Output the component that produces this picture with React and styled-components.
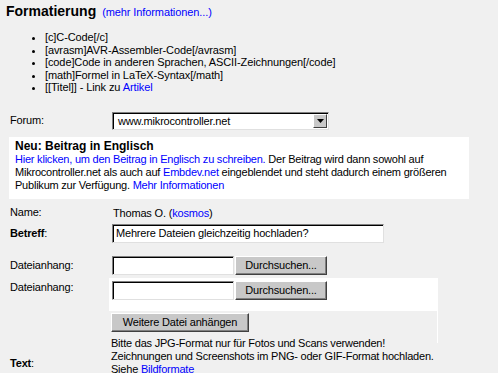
import React from "react";
import styled, { createGlobalStyle } from "styled-components";

const GlobalStyle = createGlobalStyle`
  html, body {
    margin: 0;
    padding: 0;
    background: #f0f0f0;
  }
  body {
    font-family: "Liberation Sans", Arial, sans-serif;
    font-size: 11px;
    letter-spacing: -0.18px;
    color: #000;
    overflow: hidden;
  }
`;

const formatTags = [
  "[c]C-Code[/c]",
  "[avrasm]AVR-Assembler-Code[/avrasm]",
  "[code]Code in anderen Sprachen, ASCII-Zeichnungen[/code]",
  "[math]Formel in LaTeX-Syntax[/math]",
];

const App = () => {
  return (
    <Page>
      <GlobalStyle />
      <Heading>
        Formatierung <SmallLink>(mehr Informationen...)</SmallLink>
      </Heading>
      <TagList>
        {formatTags.map((tag) => (
          <li key={tag}>{tag}</li>
        ))}
        <li>
          [[Titel]] - Link zu <Link>Artikel</Link>
        </li>
      </TagList>

      <Row $top={18}>
        <Label>Forum:</Label>
        <SelectBox>
          <span>www.mikrocontroller.net</span>
          <DropButton>
            <svg width="7" height="4" viewBox="0 0 7 4">
              <path d="M0 0h7L3.5 4z" fill="#000" />
            </svg>
          </DropButton>
        </SelectBox>
      </Row>

      <Notice>
        <NoticeTitle>Neu: Beitrag in Englisch</NoticeTitle>
        <Link>Hier klicken, um den Beitrag in Englisch zu schreiben.</Link>{" "}
        Der Beitrag wird dann sowohl auf Mikrocontroller.net als auch auf{" "}
        <Link>Embdev.net</Link> eingeblendet und steht dadurch einem größeren
        Publikum zur Verfügung. <Link>Mehr Informationen</Link>
      </Notice>

      <Row $top={7} $height={14}>
        <Label>Name:</Label>
        <Value>
          Thomas O. (<Link>kosmos</Link>)
        </Value>
      </Row>

      <Row $top={4}>
        <Label>
          <b>Betreff</b>:
        </Label>
        <TextInput $width={272}>Mehrere Dateien gleichzeitig hochladen?</TextInput>
      </Row>

      <Row $top={13}>
        <Label>Dateianhang:</Label>
        <FileField>
          <TextInput $width={122} />
          <Button $width={92}>Durchsuchen...</Button>
        </FileField>
      </Row>

      <Row $top={3} $align="start">
        <Label $offset={3}>Dateianhang:</Label>
        <AttachBox>
          <FileField>
            <TextInput $width={122} />
            <Button $width={92}>Durchsuchen...</Button>
          </FileField>
        </AttachBox>
      </Row>

      <Row $align="start">
        <Label $offset={47.5}>
          <b>Text</b>:
        </Label>
        <div>
          <ButtonArea>
            <Button $width={138}>Weitere Datei anhängen</Button>
          </ButtonArea>
          <HelpText>
            Bitte das JPG-Format nur für Fotos und Scans verwenden!
            <br />
            Zeichnungen und Screenshots im PNG- oder GIF-Format hochladen.
            <br />
            Siehe <Link>Bildformate</Link>
          </HelpText>
        </div>
      </Row>
    </Page>
  );
};

const Page = styled.div`
  width: 498px;
  height: 373px;
  overflow: hidden;
`;

const Heading = styled.h2`
  margin: 3px 0 0 6px;
  font-size: 14px;
  line-height: 16px;
  font-weight: bold;
  letter-spacing: 0;
`;

const SmallLink = styled.span`
  font-size: 11px;
  font-weight: normal;
  color: #0000ff;
  margin-left: 2px;
  letter-spacing: -0.1px;
`;

const Link = styled.span`
  color: #0000ff;
`;

const TagList = styled.ul`
  margin: 11px 0 0 0;
  padding-left: 45px;
  line-height: 12.5px;
  list-style: disc;
  letter-spacing: -0.1px;
`;

const Row = styled.div`
  display: grid;
  grid-template-columns: 102px 1fr;
  align-items: ${(p) => p.$align || "center"};
  margin: ${(p) => p.$top || 0}px 0 0 10px;
  height: ${(p) => (p.$height ? `${p.$height}px` : "auto")};
`;

const Label = styled.div`
  line-height: 13px;
  margin-top: ${(p) => p.$offset || 0}px;
`;

const Value = styled.div`
  padding-left: 1px;
  line-height: 14px;
`;

const SelectBox = styled.div`
  box-sizing: border-box;
  width: 217px;
  height: 18px;
  background: #fff;
  border: 1px solid;
  border-color: #808080 #e0e0e0 #e0e0e0 #808080;
  box-shadow: inset 1px 1px 0 #000;
  display: flex;
  align-items: center;
  justify-content: space-between;
  padding: 0 1px 0 5px;
  font-size: 11px;
`;

const DropButton = styled.div`
  box-sizing: border-box;
  width: 14px;
  height: 14px;
  background: #c8c8c8;
  border: 1px solid;
  border-color: #fff #404040 #404040 #fff;
  display: flex;
  align-items: center;
  justify-content: center;
`;

const Notice = styled.div`
  box-sizing: border-box;
  width: 460px;
  margin: 7px 0 0 9px;
  padding: 3px 4px 7px 6px;
  background: #fff;
  line-height: 13px;
  letter-spacing: -0.22px;
`;

const NoticeTitle = styled.div`
  font-size: 12px;
  font-weight: bold;
  letter-spacing: 0;
`;

const TextInput = styled.div`
  box-sizing: border-box;
  width: ${(p) => p.$width}px;
  height: 19px;
  background: #fff;
  border: 1px solid;
  border-color: #808080 #e0e0e0 #e0e0e0 #808080;
  box-shadow: inset 1px 1px 0 #000;
  padding: 0 3px;
  line-height: 17px;
  font-size: 11px;
  white-space: nowrap;
  overflow: hidden;
`;

const FileField = styled.div`
  display: flex;
  gap: 1px;
`;

const Button = styled.div`
  box-sizing: border-box;
  width: ${(p) => p.$width}px;
  height: 19px;
  background: #c8c8c8;
  border: 1px solid;
  border-color: #fff #404040 #404040 #fff;
  box-shadow: inset -1px -1px 0 #808080;
  text-align: center;
  line-height: 17px;
  font-size: 11px;
  white-space: nowrap;
`;

const AttachBox = styled.div`
  box-sizing: border-box;
  width: 329px;
  height: 32px;
  margin-left: -3px;
  padding: 3px 0 0 3px;
  background: #fff;
`;

const ButtonArea = styled.div`
  position: relative;
  box-sizing: border-box;
  width: 329px;
  height: 27px;
  margin-left: -3px;
  padding: 2px 0 0 2px;
  border-top: 1px solid #fff;

  &::after {
    content: "";
    position: absolute;
    right: 0;
    top: 0;
    width: 1px;
    height: 32px;
    background: #fff;
  }
`;

const HelpText = styled.div`
  line-height: 13px;
  margin-left: -1px;
  letter-spacing: -0.22px;
`;

export default App;
